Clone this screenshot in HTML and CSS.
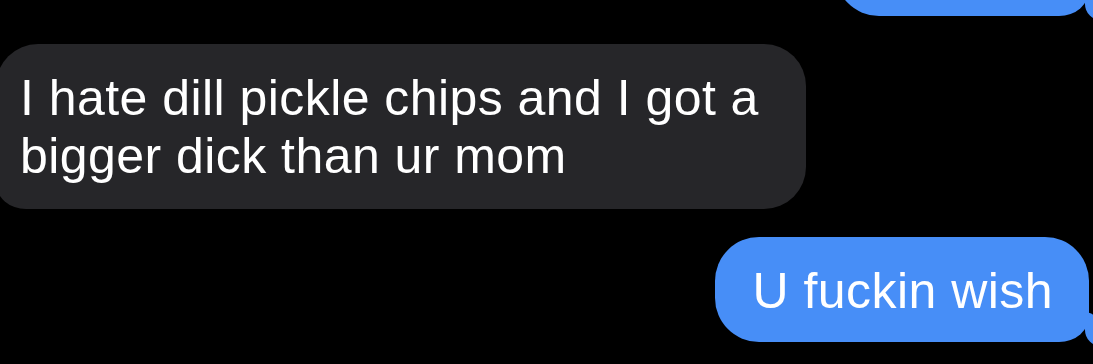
FILE: index.html
```html
<!DOCTYPE html>
<html lang="en">

<head>
    <meta charset="UTF-8">
    <meta name="viewport" content="width=device-width, initial-scale=1.0">
    <title>Messages</title>
    <link rel="stylesheet" href="styles.css">
</head>

<body>
    <div class="thread">
        <div class="bubble sent partial"></div>
        <div class="bubble received">I hate dill pickle chips and I got a bigger dick than ur mom</div>
        <div class="bubble sent">U fuckin wish</div>
    </div>
</body>

</html>
```

FILE: styles.css
```css
:root {
    --background-color: #000000;
    --sent-color: #478ef7;
    --received-color: #262629;
    --text-color: #ffffff;
}

body {
    margin: 0;
    height: 364px;
    overflow: hidden;
    background-color: var(--background-color);
    font-family: "Liberation Sans", Arial, sans-serif;
}

.thread {
    display: flex;
    flex-direction: column;
    gap: 28px;
    padding-right: 4px;
}

.bubble {
    position: relative;
    box-sizing: border-box;
    font-size: 50px;
    line-height: 58px;
    letter-spacing: 0.45px;
    color: var(--text-color);
}

.sent {
    align-self: flex-end;
    padding: 25px 36px 22px 38px;
    background-color: var(--sent-color);
    border-radius: 44px 44px 30px 44px / 44px 44px 26px 44px;
}

.received {
    align-self: flex-start;
    max-width: 810px;
    margin-left: -4px;
    padding: 25px 36px 24px 24px;
    background-color: var(--received-color);
    border-radius: 42px 42px 42px 30px / 42px 42px 42px 26px;
}

.partial {
    width: 254px;
    height: 105px;
    margin-top: -89px;
}

/* tails */
.bubble::before {
    content: "";
    position: absolute;
    bottom: -4px;
    width: 16px;
    height: 34px;
}

.sent::before {
    right: -12px;
    background-color: var(--sent-color);
    border-bottom-left-radius: 16px;
    border-top-right-radius: 16px 20px;
}

.received::before {
    left: -12px;
    background-color: var(--received-color);
    border-bottom-right-radius: 16px;
    border-top-left-radius: 16px 20px;
}
```
